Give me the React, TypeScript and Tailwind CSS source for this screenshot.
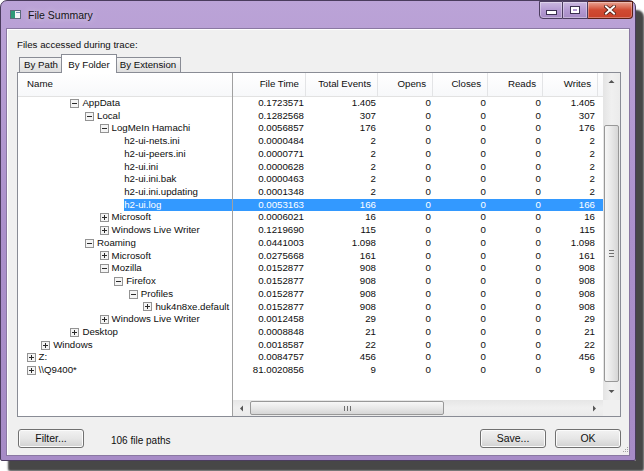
import React from 'react';

type Node = 'plus' | 'minus' | 'leaf';

interface Row {
  name: string;
  lvl: number;
  node: Node;
  time: string;
  events: string;
  writes: string;
  sel?: boolean;
}

const rows: Row[] = [
  { name: 'AppData', lvl: 3, node: 'minus', time: '0.1723571', events: '1.405', writes: '1.405' },
  { name: 'Local', lvl: 4, node: 'minus', time: '0.1282568', events: '307', writes: '307' },
  { name: 'LogMeIn Hamachi', lvl: 5, node: 'minus', time: '0.0056857', events: '176', writes: '176' },
  { name: 'h2-ui-nets.ini', lvl: 6, node: 'leaf', time: '0.0000484', events: '2', writes: '2' },
  { name: 'h2-ui-peers.ini', lvl: 6, node: 'leaf', time: '0.0000771', events: '2', writes: '2' },
  { name: 'h2-ui.ini', lvl: 6, node: 'leaf', time: '0.0000628', events: '2', writes: '2' },
  { name: 'h2-ui.ini.bak', lvl: 6, node: 'leaf', time: '0.0000463', events: '2', writes: '2' },
  { name: 'h2-ui.ini.updating', lvl: 6, node: 'leaf', time: '0.0001348', events: '2', writes: '2' },
  { name: 'h2-ui.log', lvl: 6, node: 'leaf', time: '0.0053163', events: '166', writes: '166', sel: true },
  { name: 'Microsoft', lvl: 5, node: 'plus', time: '0.0006021', events: '16', writes: '16' },
  { name: 'Windows Live Writer', lvl: 5, node: 'plus', time: '0.1219690', events: '115', writes: '115' },
  { name: 'Roaming', lvl: 4, node: 'minus', time: '0.0441003', events: '1.098', writes: '1.098' },
  { name: 'Microsoft', lvl: 5, node: 'plus', time: '0.0275668', events: '161', writes: '161' },
  { name: 'Mozilla', lvl: 5, node: 'minus', time: '0.0152877', events: '908', writes: '908' },
  { name: 'Firefox', lvl: 6, node: 'minus', time: '0.0152877', events: '908', writes: '908' },
  { name: 'Profiles', lvl: 7, node: 'minus', time: '0.0152877', events: '908', writes: '908' },
  { name: 'huk4n8xe.default', lvl: 8, node: 'plus', time: '0.0152877', events: '908', writes: '908' },
  { name: 'Windows Live Writer', lvl: 5, node: 'plus', time: '0.0012458', events: '29', writes: '29' },
  { name: 'Desktop', lvl: 3, node: 'plus', time: '0.0008848', events: '21', writes: '21' },
  { name: 'Windows', lvl: 1, node: 'plus', time: '0.0018587', events: '22', writes: '22' },
  { name: 'Z:', lvl: 0, node: 'plus', time: '0.0084757', events: '456', writes: '456' },
  { name: '\\\\Q9400*', lvl: 0, node: 'plus', time: '81.0020856', events: '9', writes: '9' },
];

const NodeBox = ({ kind }: { kind: 'plus' | 'minus' }) => (
  <svg width="9" height="9" viewBox="0 0 9 9" className="shrink-0">
    <rect x="0.5" y="0.5" width="8" height="8" fill="#f4f4f4" stroke="#939393" />
    <path d="M2 4.5h5" stroke="#2a2a2a" />
    {kind === 'plus' && <path d="M4.5 2v5" stroke="#2a2a2a" />}
  </svg>
);

const Arrow = ({ dir }: { dir: 'up' | 'down' | 'left' | 'right' }) => {
  const d = {
    up: 'M0.5 4 L3.5 1 L6.5 4 Z',
    down: 'M0.5 1 L3.5 4 L6.5 1 Z',
    left: 'M4 0.5 L1 3.5 L4 6.5 Z',
    right: 'M1 0.5 L4 3.5 L1 6.5 Z',
  }[dir];
  const horiz = dir === 'left' || dir === 'right';
  return (
    <svg width={horiz ? 5 : 7} height={horiz ? 7 : 5} viewBox={horiz ? '0 0 5 7' : '0 0 7 5'}>
      <path d={d} fill="#555" />
    </svg>
  );
};

const Button = ({ label, className = '' }: { label: string; className?: string }) => (
  <div
    className={`h-[19px] w-[66px] rounded-[3px] border border-[#707070] bg-gradient-to-b from-[#f2f2f2] via-[#e6e6e6] to-[#d1d1d1] shadow-[inset_0_0_0_1px_#fbfbfb] flex items-center justify-center text-[10.5px] text-[#111] ${className}`}
  >
    {label}
  </div>
);

const cols = [
  { label: 'File Time', w: 'w-[73px]' },
  { label: 'Total Events', w: 'w-[72px]' },
  { label: 'Opens', w: 'w-[55px]' },
  { label: 'Closes', w: 'w-[55px]' },
  { label: 'Reads', w: 'w-[55px]' },
  { label: 'Writes', w: 'w-[55px]' },
];

export default function App() {
  return (
    <div className="w-[644px] h-[471px] bg-white overflow-hidden font-['Liberation_Sans',Arial,sans-serif] text-[#0e0e0e]">
      <div className="w-[636px] h-[461px] rounded-t-[7px] rounded-b-[2px] border border-[#4a3c5d] bg-gradient-to-b from-[#bba3d7] via-[#ab90cb] to-[#a68bc6] shadow-[8px_10px_2px_#474747] flex flex-col">
        {/* title bar */}
        <div className="h-[27px] flex items-start shrink-0">
          <svg width="11" height="9" viewBox="0 0 11 9" className="mt-[9px] ml-[9px]">
            <rect x="0.5" y="0.5" width="10" height="8" fill="#f4f6f8" stroke="#5c6b7a" />
            <rect x="1" y="1" width="4" height="7" fill="#2f9a78" />
            <rect x="6" y="2" width="4" height="1" fill="#6d8fb3" />
          </svg>
          <span className="ml-[7px] mt-[8px] text-[10.5px] leading-[12px] text-[#151515] [text-shadow:0_0_6px_rgba(255,255,255,0.7)]">
            File Summary
          </span>
          <div className="flex-1" />
          <div className="flex h-[18px] mr-[2px]">
            <div className="w-[24px] h-full border border-[#4c3d60] rounded-bl-[4px] bg-gradient-to-b from-[#cbb9e0] via-[#b49ad2] to-[#a58ac4] shadow-[inset_0_0_0_1px_rgba(255,255,255,0.35)] flex items-center justify-center">
              <div className="mt-[5px] w-[9px] h-[3px] bg-white border border-[#3b3050] box-content" />
            </div>
            <div className="w-[25px] h-full border-y border-r border-[#4c3d60] bg-gradient-to-b from-[#cbb9e0] via-[#b49ad2] to-[#a58ac4] shadow-[inset_0_0_0_1px_rgba(255,255,255,0.35)] flex items-center justify-center">
              <div className="w-[8px] h-[6px] border-[2px] border-white outline outline-1 outline-[#3b3050]" />
            </div>
            <div className="w-[45px] h-full border-y border-r border-[#5a1f16] rounded-br-[4px] bg-gradient-to-b from-[#e8a293] via-[#d04a32] to-[#c9412b] shadow-[inset_0_0_0_1px_rgba(255,255,255,0.3)] flex items-center justify-center">
              <svg width="12" height="10" viewBox="0 0 12 10">
                <path d="M2 1.5 L10 8.5 M10 1.5 L2 8.5" stroke="#4a1a12" strokeWidth="3.6" strokeLinecap="square" />
                <path d="M2 1.5 L10 8.5 M10 1.5 L2 8.5" stroke="#fff" strokeWidth="2" strokeLinecap="square" />
              </svg>
            </div>
          </div>
        </div>

        {/* client */}
        <div className="mx-[5px] h-[428px] border border-[#8a78a2] bg-[#f0f0f0] shadow-[inset_1px_1px_0_#fff] flex flex-col">
          <div className="mt-[10px] ml-[10px] h-[12px] text-[9.7px] leading-[12px]">Files accessed during trace:</div>

          {/* tabs */}
          <div className="mt-[3px] ml-[12px] h-[18px] flex items-end text-[9.7px]">
            <div className="w-[43px] h-[15px] border-t border-l border-[#898c95] bg-gradient-to-b from-[#f4f4f4] to-[#dedede] flex items-center justify-center">
              By Path
            </div>
            <div className="relative z-10 -ml-[1px] -mb-px w-[56px] h-[19px] border-t border-x border-[#898c95] bg-white flex items-start justify-center pt-[3px]">
              By Folder
            </div>
            <div className="-ml-[1px] w-[65px] h-[15px] border-t border-r border-[#898c95] bg-gradient-to-b from-[#f4f4f4] to-[#dedede] flex items-center justify-center">
              By Extension
            </div>
          </div>

          {/* tab page / list */}
          <div className="ml-[10px] w-[604px] h-[345px] border border-[#898c95] bg-white flex text-[9.7px]">
            {/* tree pane */}
            <div className="w-[214px] flex flex-col overflow-hidden">
              <div className="h-[24px] shrink-0 border-b border-[#e2e2e2] bg-gradient-to-b from-white to-[#f7f8fa] flex items-center pl-[9px]">
                Name
              </div>
              {rows.map((r, i) => (
                <div key={i} className="h-[12.73px] flex items-center shrink-0" style={{ paddingLeft: 8.6 + 14.6 * r.lvl }}>
                  {r.node === 'leaf' ? <div className="w-[9px] shrink-0" /> : <NodeBox kind={r.node} />}
                  <span
                    className={`h-full flex-1 leading-[12.73px] whitespace-nowrap ${r.node === 'leaf' ? 'ml-[1px] pl-[0px]' : 'ml-[2px] pl-[1px]'} ${r.sel ? 'bg-[#3399ff] text-white' : ''}`}
                  >
                    {r.name}
                  </span>
                </div>
              ))}
            </div>

            <div className="w-px bg-[#a0a0a0]" />

            {/* data pane */}
            <div className="w-[370px] flex flex-col">
              <div className="h-[24px] shrink-0 border-b border-[#e2e2e2] bg-gradient-to-b from-white to-[#f7f8fa] flex">
                {cols.map((c) => (
                  <div key={c.label} className={`${c.w} h-full border-r border-[#e3e4e6] flex items-center justify-end pr-[6px]`}>
                    {c.label}
                  </div>
                ))}
              </div>
              <div className="h-[303px] flex flex-col">
                {rows.map((r, i) => (
                  <div key={i} className={`h-[12.73px] shrink-0 flex leading-[12.73px] ${r.sel ? 'bg-[#3399ff] text-white' : ''}`}>
                    <div className="w-[73px] text-right pr-[2px]">{r.time}</div>
                    <div className="w-[72px] text-right pr-[2px]">{r.events}</div>
                    <div className="w-[55px] text-right pr-[2px]">0</div>
                    <div className="w-[55px] text-right pr-[2px]">0</div>
                    <div className="w-[55px] text-right pr-[2px]">0</div>
                    <div className="w-[55px] text-right pr-[3px]">{r.writes}</div>
                  </div>
                ))}
              </div>
              {/* horizontal scrollbar */}
              <div className="h-[16px] shrink-0 bg-gradient-to-b from-[#e6e6e6] via-[#f0f0f0] to-[#ebebeb] flex items-center">
                <div className="w-[17px] flex justify-center">
                  <Arrow dir="left" />
                </div>
                <div className="w-[194px] h-[14px] rounded-[2px] border border-[#989898] bg-gradient-to-b from-[#f7f7f7] via-[#e8e8e8] to-[#d6d6d6] flex items-center justify-center gap-[2px]">
                  <div className="w-px h-[5px] bg-[#6f6f6f]" />
                  <div className="w-px h-[5px] bg-[#6f6f6f]" />
                  <div className="w-px h-[5px] bg-[#6f6f6f]" />
                </div>
                <div className="flex-1" />
                <div className="w-[17px] flex justify-center">
                  <Arrow dir="right" />
                </div>
              </div>
            </div>

            {/* vertical scrollbar */}
            <div className="w-[17px] flex flex-col">
              <div className="h-[327px] bg-gradient-to-r from-[#e4e4e4] via-[#f0f0f0] to-[#ebebeb] flex flex-col items-center">
                <div className="h-[17px] flex items-center justify-center">
                  <Arrow dir="up" />
                </div>
                <div className="h-[35px]" />
                <div className="w-[15px] h-[257px] rounded-[2px] border border-[#989898] bg-gradient-to-r from-[#f7f7f7] via-[#e8e8e8] to-[#d6d6d6] flex flex-col items-center justify-center gap-[2px]">
                  <div className="w-[5px] h-px bg-[#6f6f6f]" />
                  <div className="w-[5px] h-px bg-[#6f6f6f]" />
                  <div className="w-[5px] h-px bg-[#6f6f6f]" />
                </div>
                <div className="flex-1" />
                <div className="h-[17px] flex items-center justify-center">
                  <Arrow dir="down" />
                </div>
              </div>
              <div className="h-[16px] bg-[#f0f0f0]" />
            </div>
          </div>

          {/* bottom bar */}
          <div className="flex-1 flex items-start">
            <Button label="Filter..." className="mt-[12px] ml-[11px]" />
            <span className="mt-[18px] ml-[27px] text-[10px] leading-[12px]">106 file paths</span>
            <div className="flex-1" />
            <Button label="Save..." className="mt-[12px]" />
            <Button label="OK" className="mt-[12px] ml-[9px]" />
            <svg width="7" height="7" viewBox="0 0 7 7" className="self-end mb-[2px] ml-px">
              <rect x="5" y="1" width="1" height="1" fill="#a0a0a0" />
              <rect x="3" y="3" width="1" height="1" fill="#a0a0a0" />
              <rect x="5" y="3" width="1" height="1" fill="#a0a0a0" />
              <rect x="1" y="5" width="1" height="1" fill="#a0a0a0" />
              <rect x="3" y="5" width="1" height="1" fill="#a0a0a0" />
              <rect x="5" y="5" width="1" height="1" fill="#a0a0a0" />
            </svg>
          </div>
        </div>
      </div>
    </div>
  );
}
